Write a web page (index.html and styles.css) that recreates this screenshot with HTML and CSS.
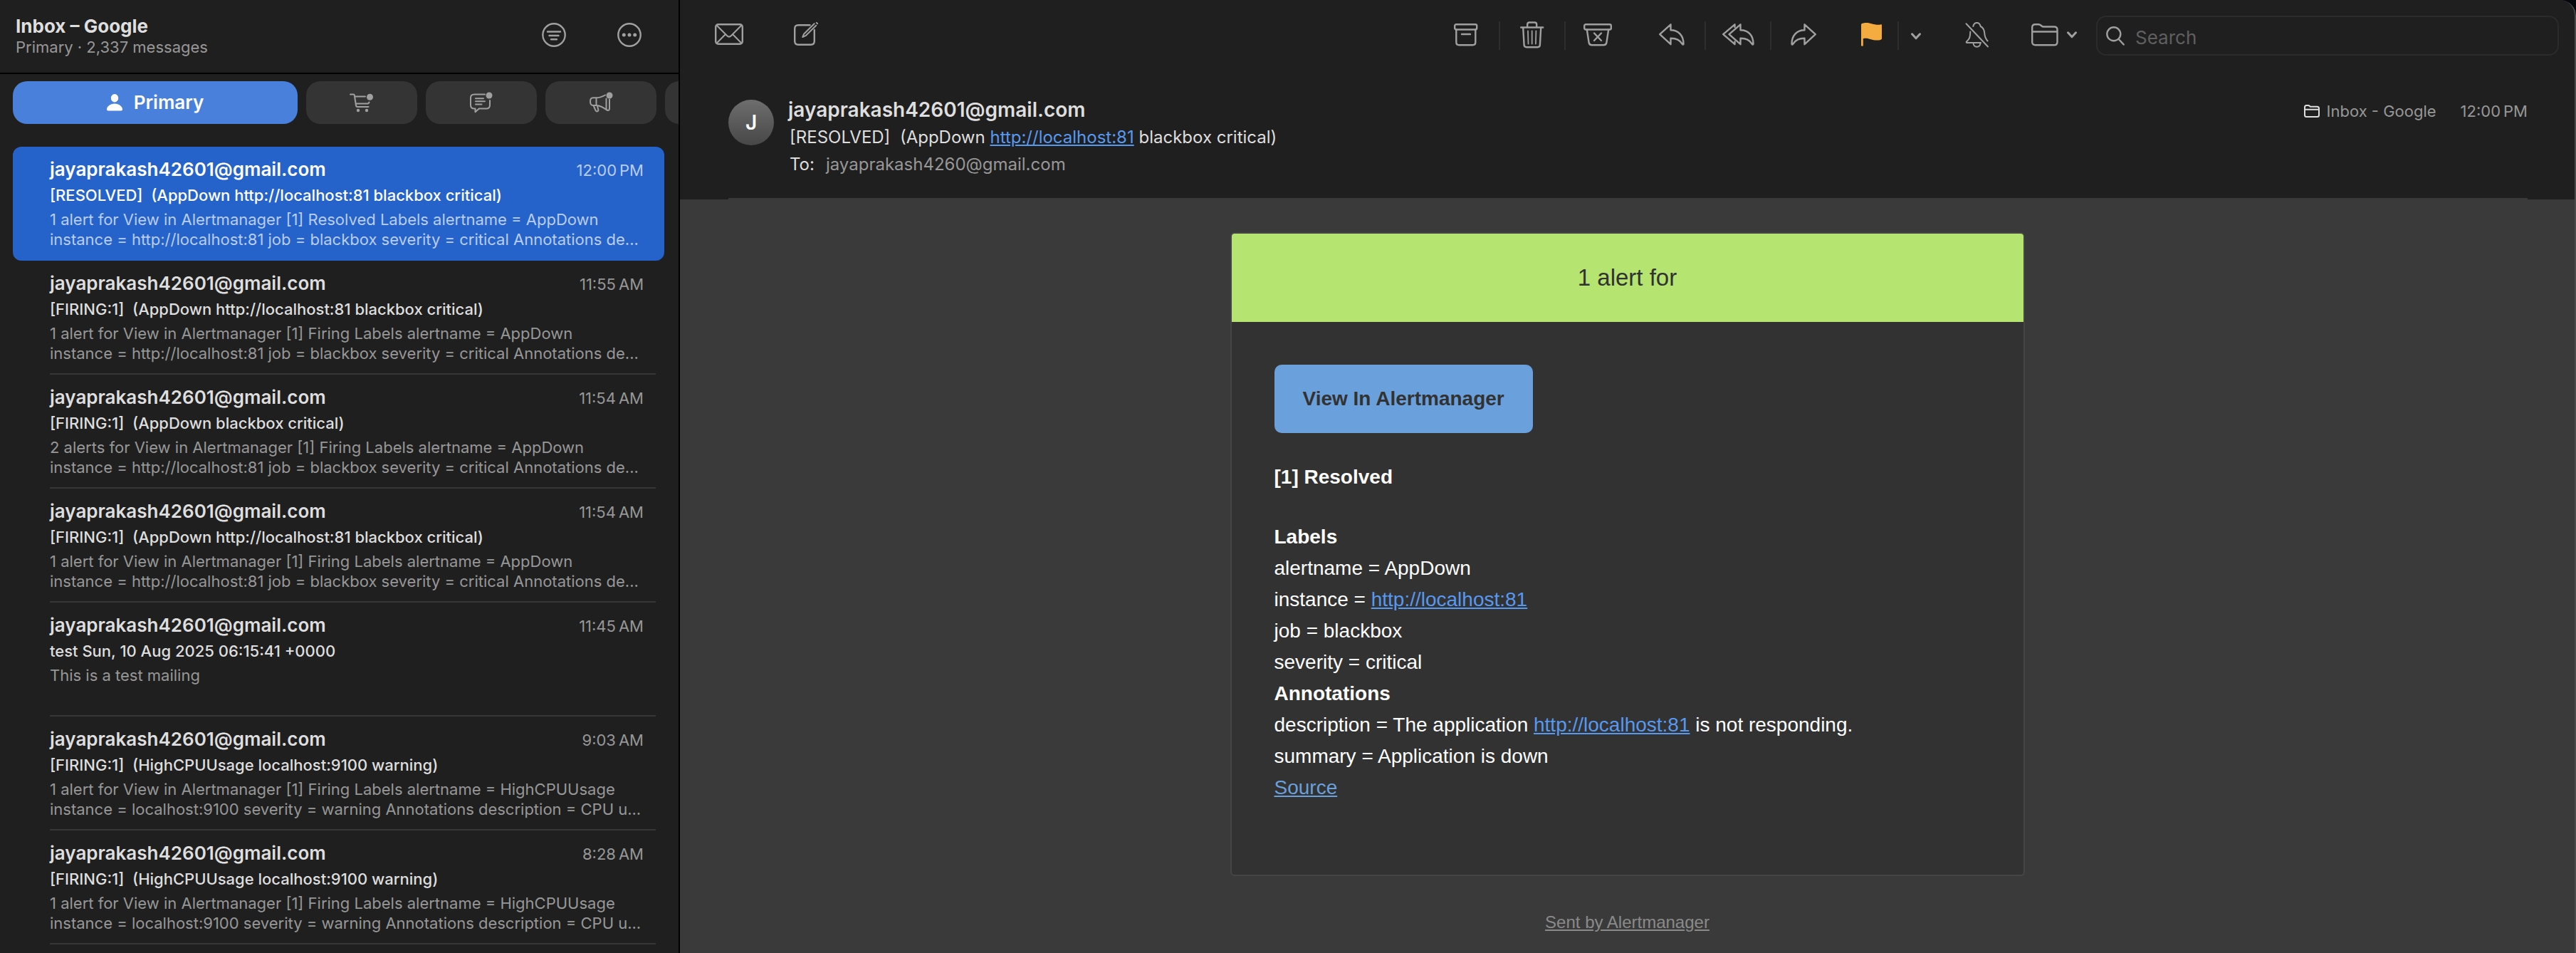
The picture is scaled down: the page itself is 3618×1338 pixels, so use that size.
FILE: index.html
```html
<!DOCTYPE html>
<html lang="en">
<head>
<meta charset="utf-8">
<title>Inbox – Google</title>
<meta name="viewport" content="width=device-width, initial-scale=1">
<link rel="stylesheet" href="styles.css">
</head>
<body>
<div class="window">
  <aside class="sidebar">
    <header class="sidebar-header">
      <div class="mailbox">
        <h1 class="mailbox-name">Inbox – Google</h1>
        <p class="mailbox-meta">Primary · 2,337 messages</p>
      </div>
      <div class="sidebar-actions">
        <button class="icon-button" type="button" aria-label="Filter">
          <svg class="icon" width="34" height="34" viewBox="0 0 34 34"><circle cx="17" cy="17" r="15.7"/><path d="M8 12.5h18M10.5 18h13M13 23.3h8"/></svg>
        </button>
        <button class="icon-button" type="button" aria-label="More">
          <svg class="icon" width="34" height="34" viewBox="0 0 34 34"><circle cx="17" cy="17" r="15.7"/><g class="solid"><circle cx="9.3" cy="17" r="2.5"/><circle cx="17" cy="17" r="2.5"/><circle cx="24.7" cy="17" r="2.5"/></g></svg>
        </button>
      </div>
    </header>

    <nav class="tabs" aria-label="Categories">
      <button class="tab tab-active" type="button">
        <svg width="22" height="24" viewBox="0 0 22 24"><path fill="currentColor" d="M11 0a5.2 5.7 0 0 1 0 11.4A5.2 5.7 0 0 1 11 0zM2 23.5c-1.300 0-2-.7-2-1.900C0 17.500 5 13.500 11 13.500s11 4 11 8.100c0 1.200-.7 1.900-2 1.900z"/></svg>
        <span>Primary</span>
      </button>
      <button class="tab" type="button" aria-label="Transactions">
        <svg class="icon thin" width="34" height="28" viewBox="0 0 34 28"><path d="M1 2.500h4.500c.7 0 1.200.4 1.300 1.100L9 18c.2 1.300.8 1.900 2 1.900h15.500M7.500 5.500H22M8.700 15.500h16.500c1.300 0 1.900-.6 2.200-2"/><g class="solid"><circle cx="12" cy="25" r="2.200"/><circle cx="24" cy="25" r="2.200"/><circle cx="28.500" cy="6.300" r="4.500"/></g></svg>
      </button>
      <button class="tab" type="button" aria-label="Updates">
        <svg class="icon thin" width="32" height="30" viewBox="0 0 32 30"><path d="M21 3.500H6C3 3.500 1 5.500 1 8.500v10c0 3 2 5 5 5h1.500v4.700l5.300-4.700H23c3 0 5-2 5-5V12M8 9.200h11M8 13.300h13M8 17.500h8.500"/><g class="solid"><circle cx="27" cy="5" r="4.500"/></g></svg>
      </button>
      <button class="tab" type="button" aria-label="Promotions">
        <svg class="icon thin" width="33" height="30" viewBox="0 0 33 30"><path d="M22 4.500C17 7.300 13.500 8.300 9.500 8.300H5C2.500 8.300 1 10 1 13.500s1.500 5.500 4 5.500h4.500c5 .3 9 2 14 6M9.500 8.500v10.300M23.500 9.500V23c0 4 4.500 4 4.500 0V10.500M5.500 19.200l3 6.800c1 2.500 4.300 1.500 3.800-1l-1.500-5.700"/><g class="solid"><circle cx="28" cy="5" r="4.500"/></g></svg>
      </button>
      <button class="tab" type="button" aria-label="All Mail"></button>
    </nav>

    <ul class="messages">
      <li class="message selected">
        <a class="message-link" href="#m1">
          <span class="line"><strong class="sender">jayaprakash42601@gmail.com</strong><time class="time">12:00&#8239;PM</time></span>
          <span class="subject">[RESOLVED]&nbsp; (AppDown http://localhost:81 blackbox critical)</span>
          <span class="preview">1 alert for View in Alertmanager [1] Resolved Labels alertname = AppDown<br>instance = http://localhost:81 job = blackbox severity = critical Annotations de...</span>
        </a>
      </li>
      <li class="message">
        <a class="message-link" href="#m2">
          <span class="line"><strong class="sender">jayaprakash42601@gmail.com</strong><time class="time">11:55&#8239;AM</time></span>
          <span class="subject">[FIRING:1]&nbsp; (AppDown http://localhost:81 blackbox critical)</span>
          <span class="preview">1 alert for View in Alertmanager [1] Firing Labels alertname = AppDown<br>instance = http://localhost:81 job = blackbox severity = critical Annotations de...</span>
        </a>
      </li>
      <li class="message">
        <a class="message-link" href="#m3">
          <span class="line"><strong class="sender">jayaprakash42601@gmail.com</strong><time class="time">11:54&#8239;AM</time></span>
          <span class="subject">[FIRING:1]&nbsp; (AppDown blackbox critical)</span>
          <span class="preview">2 alerts for View in Alertmanager [1] Firing Labels alertname = AppDown<br>instance = http://localhost:81 job = blackbox severity = critical Annotations de...</span>
        </a>
      </li>
      <li class="message">
        <a class="message-link" href="#m4">
          <span class="line"><strong class="sender">jayaprakash42601@gmail.com</strong><time class="time">11:54&#8239;AM</time></span>
          <span class="subject">[FIRING:1]&nbsp; (AppDown http://localhost:81 blackbox critical)</span>
          <span class="preview">1 alert for View in Alertmanager [1] Firing Labels alertname = AppDown<br>instance = http://localhost:81 job = blackbox severity = critical Annotations de...</span>
        </a>
      </li>
      <li class="message">
        <a class="message-link" href="#m5">
          <span class="line"><strong class="sender">jayaprakash42601@gmail.com</strong><time class="time">11:45&#8239;AM</time></span>
          <span class="subject">test Sun, 10 Aug 2025 06:15:41 +0000</span>
          <span class="preview">This is a test mailing</span>
        </a>
      </li>
      <li class="message">
        <a class="message-link" href="#m6">
          <span class="line"><strong class="sender">jayaprakash42601@gmail.com</strong><time class="time">9:03&#8239;AM</time></span>
          <span class="subject">[FIRING:1]&nbsp; (HighCPUUsage localhost:9100 warning)</span>
          <span class="preview">1 alert for View in Alertmanager [1] Firing Labels alertname = HighCPUUsage<br>instance = localhost:9100 severity = warning Annotations description = CPU u...</span>
        </a>
      </li>
      <li class="message">
        <a class="message-link" href="#m7">
          <span class="line"><strong class="sender">jayaprakash42601@gmail.com</strong><time class="time">8:28&#8239;AM</time></span>
          <span class="subject">[FIRING:1]&nbsp; (HighCPUUsage localhost:9100 warning)</span>
          <span class="preview">1 alert for View in Alertmanager [1] Firing Labels alertname = HighCPUUsage<br>instance = localhost:9100 severity = warning Annotations description = CPU u...</span>
        </a>
      </li>
    </ul>
  </aside>

  <main class="viewer">
    <div class="toolbar">
      <div class="compose-actions">
        <button class="icon-button" type="button" aria-label="Get mail">
          <svg class="icon" width="40" height="32" viewBox="0 0 40 32"><rect x="1.200" y="2.200" width="37.600" height="27.600" rx="3.500"/><path d="M2.500 3.500l14.700 14.700c1.800 1.800 3.800 1.800 5.600 0L37.500 3.500M2.500 28.700l12.300-12.500M37.500 28.700L25.200 16.200" stroke-width="2"/></svg>
        </button>
        <button class="icon-button" type="button" aria-label="New message">
          <svg class="icon" width="34" height="34" viewBox="0 0 34 34"><path d="M22.500 4.200H6.200c-3.300 0-5 1.700-5 5v17.600c0 3.300 1.700 5 5 5h17.600c3.300 0 5-1.700 5-5V11"/><path d="M12.300 21l1.700-4.200L28.700 2.200M12.300 21l4.200-1.800L31.200 4.800M31.800.9l1.300 1.300" stroke-width="2"/></svg>
        </button>
      </div>

      <div class="group">
        <button class="cell" type="button" aria-label="Archive">
          <svg class="icon" width="34" height="32" viewBox="0 0 34 32"><rect x="1.200" y="1.200" width="31" height="7.300" rx="2"/><path d="M3.300 8.500v17.700c0 2.800 1.300 4 4 4h19c2.700 0 4-1.200 4-4V8.500M11 15h12"/></svg>
        </button>
        <button class="cell" type="button" aria-label="Delete">
          <svg class="icon" width="34" height="38" viewBox="0 0 34 38"><path d="M1.200 8.500h31M10.200 8V4.300c0-1.800 1-2.800 2.800-2.800h7.400c1.800 0 2.800 1 2.800 2.800V8M4.200 9l1.400 24c.1 2.200 1.200 3.200 3.300 3.200h15.700c2.100 0 3.200-1 3.300-3.200L29.200 9"/><path d="M11 13.500l.5 18M16.700 13.500v18M22.400 13.500l-.5 18" stroke-width="1.800"/></svg>
        </button>
        <button class="cell" type="button" aria-label="Junk">
          <svg class="icon" width="40" height="32" viewBox="0 0 40 32"><rect x="1.200" y="1.200" width="37.600" height="7.300" rx="2"/><path d="M4.800 8.500l2.800 18.200c.4 2.500 1.700 3.500 4.200 3.500h16.400c2.500 0 3.800-1 4.200-3.500l2.800-18.200M15 13.500l10 10.500M25 13.500L15 24"/></svg>
        </button>
      </div>

      <div class="group">
        <button class="cell" type="button" aria-label="Reply">
          <svg class="icon" width="36" height="31" viewBox="0 0 36 31"><path d="M1.200 15.200L16.500 1.300V9.300C27.500 9.300 34.500 17 34.500 28.500C34.500 29.700 33.500 29.900 33 29C29 22.800 24.500 20.800 16.500 20.800V29.200Z"/></svg>
        </button>
        <button class="cell" type="button" aria-label="Reply all">
          <svg class="icon" width="45" height="31" viewBox="0 0 45 31"><path d="M17.500 5V1.300L1.200 15.200L17.500 29.200V25.500"/><path d="M9.500 15.200L25.500 1.300V9.300C37 9.300 43.500 17 43.500 28.500C43.500 29.700 42.500 29.900 42 29C38 22.800 33.500 20.800 25.500 20.800V29.200Z"/></svg>
        </button>
        <button class="cell" type="button" aria-label="Forward">
          <svg class="icon" width="36" height="31" viewBox="0 0 36 31"><path d="M34.800 15.200L19.500 1.300V9.300C8.500 9.300 1.500 17 1.500 28.500C1.500 29.700 2.500 29.900 3 29C7 22.800 11.500 20.800 19.500 20.800V29.200Z"/></svg>
        </button>
      </div>

      <div class="group">
        <button class="cell cell-flag" type="button" aria-label="Flag">
          <svg width="29" height="33" viewBox="0 0 29 33"><path fill="#f4ab40" d="M0 2.800C0 1 3 0 7 0c7 0 10 2.800 17 2.800 1.600 0 2.700-.3 3.700-.6.800-.2 1.300.1 1.300.8v19c0 1.800-3 2.600-6.500 2.600C15 24.600 12 21.700 6 21.700c-1.500 0-2.500.2-3.200.5v9.300c0 1.800-2.800 1.800-2.800 0z"/></svg>
        </button>
        <button class="cell cell-menu" type="button" aria-label="Flag colours">
          <svg class="icon chevron" width="14" height="10" viewBox="0 0 14 10"><path d="M1.500 1.800L7 7.800l5.500-6"/></svg>
        </button>
      </div>

      <button class="cell cell-mute" type="button" aria-label="Mute">
        <svg class="icon thin" width="34" height="36" viewBox="0 0 34 36"><path d="M1.500 2.200L32 34.500M11.300 6c.7-3 2.500-5 5.200-5s4.500 2 5.200 5c4 2 5.500 5.500 5.700 10.500.2 5 1.600 7 4.200 10M7.300 13.500c-.3 9-1.400 10-5.300 14-.6.700-.3 1.500.6 1.500h19.500M11.500 29.500c.3 3.400 2.200 5.200 5 5.200s4.700-1.800 5-5.200"/></svg>
      </button>

      <button class="move" type="button" aria-label="Move to">
        <svg class="icon" width="38" height="32" viewBox="0 0 38 32"><path d="M1.200 26V5.500C1.200 2.700 2.600 1.200 5.500 1.200H10c1.500 0 2.300.4 3.300 1.300l1.200 1c.9.800 1.600 1 2.900 1h14.700c2.900 0 4.400 1.500 4.400 4.300V26c0 2.900-1.500 4.300-4.400 4.300H5.600C2.700 30.300 1.200 28.900 1.200 26zM1.200 11.500h35.300"/></svg>
        <svg class="icon chevron" width="14" height="10" viewBox="0 0 14 10"><path d="M1.500 1.800L7 7.800l5.500-6"/></svg>
      </button>

      <label class="search">
        <svg class="icon" width="26" height="27" viewBox="0 0 26 27"><circle cx="10.800" cy="10.800" r="9.500"/><path d="M17.700 18l7 7.500"/></svg>
        <input class="search-input" type="search" placeholder="Search" aria-label="Search">
      </label>
    </div>

    <header class="message-header">
      <span class="avatar" aria-hidden="true">J</span>
      <div class="envelope">
        <h2 class="from">jayaprakash42601@gmail.com</h2>
        <p class="header-line">[RESOLVED]&nbsp; (AppDown <a class="link" href="http://localhost:81">http://localhost:81</a> blackbox critical)</p>
        <p class="header-line recipients"><span>To:</span><span class="recipient">jayaprakash4260@gmail.com</span></p>
      </div>
      <div class="origin">
        <svg class="origin-icon" width="22" height="18" viewBox="0 0 22 18"><path d="M1 14V3.500C1 1.800 1.800 1 3.500 1h2.300c.9 0 1.400.2 2 .8l.4.4c.5.500.9.600 1.700.600h8.600c1.700 0 2.500.8 2.500 2.500V14.500c0 1.700-.8 2.500-2.500 2.500h-15C1.800 17 1 16.200 1 14.500zM1 6.800h20"/></svg>
        <span>Inbox - Google</span>
        <time class="origin-time">12:00&#8239;PM</time>
      </div>
    </header>

    <article class="mail-body">
      <section class="alert-card">
        <h3 class="alert-title">1 alert for</h3>
        <div class="alert-content">
          <a class="alert-button" href="#alertmanager">View In Alertmanager</a>
          <p><strong>[1] Resolved</strong></p>
          <p>
            <strong>Labels</strong><br>
            alertname = AppDown<br>
            instance = <a class="link" href="http://localhost:81">http://localhost:81</a><br>
            job = blackbox<br>
            severity = critical<br>
            <strong>Annotations</strong><br>
            description = The application <a class="link" href="http://localhost:81">http://localhost:81</a> is not responding.<br>
            summary = Application is down<br>
            <a class="source-link" href="#source">Source</a>
          </p>
        </div>
      </section>
      <footer class="mail-footer"><a class="footer-link" href="#alertmanager">Sent by Alertmanager</a></footer>
    </article>
  </main>
</div>
</body>
</html>
```
FILE: styles.css
```css
* {
  box-sizing: border-box;
}

body {
  margin: 0;
  background: #06070d;
  color: #dedede;
  font-family: Inter, "Liberation Sans", sans-serif;
  font-size: 22px;
  line-height: 28px;
}

h1, h2, h3, p, ul {
  margin: 0;
  padding: 0;
}

button {
  margin: 0;
  padding: 0;
  border: 0;
  background: none;
  color: inherit;
  font: inherit;
}

.window {
  position: relative;
  display: flex;
  min-height: 100vh;
  overflow: hidden;
  background: #1f1f1f;
  border-top-right-radius: 22px;
}

/* light rim along the right edge of the window */
.window::after {
  content: "";
  position: absolute;
  inset: 0;
  border-right: 2px solid #4a4a4a;
  border-top-right-radius: 22px;
  pointer-events: none;
}

.icon {
  display: block;
  flex: none;
  fill: none;
  stroke: #a0a0a0;
  stroke-width: 2.4;
  stroke-linecap: round;
  stroke-linejoin: round;
}

.thin {
  stroke-width: 2;
}

.chevron {
  stroke-width: 3;
}

.solid {
  fill: #a0a0a0;
  stroke: none;
}

/* Sidebar */

.sidebar {
  flex: none;
  width: 955px;
  border-right: 2px solid #000;
  overflow: hidden;
}

.sidebar-header {
  display: flex;
  justify-content: space-between;
  align-items: center;
  height: 104px;
  padding: 0 52px 2px 22px;
  border-bottom: 2px solid #000;
}

.mailbox-name {
  font-size: 26px;
  line-height: 32px;
  font-weight: 700;
}

.mailbox-meta {
  line-height: 26px;
  color: #979797;
}

.sidebar-actions {
  display: flex;
  gap: 72px;
  padding-bottom: 2px;
}

.tabs {
  display: flex;
  gap: 12px;
  padding: 10px 0 32px 18px;
}

.tab {
  display: flex;
  flex: none;
  align-items: center;
  justify-content: center;
  width: 156px;
  height: 60px;
  border-radius: 20px;
  background: #343434;
}

.tab-active {
  gap: 16px;
  width: 400px;
  background: #4880db;
  color: #fff;
  font-size: 26px;
  font-weight: 600;
}

.messages {
  list-style: none;
  padding: 0 20px 0 18px;
}

.message {
  height: 160px;
  padding: 16px 12px 0 52px;
  border-radius: 12px;
}

.message-link {
  display: flex;
  flex-direction: column;
  gap: 6px;
  height: 144px;
  padding-right: 17px;
  border-bottom: 2px solid #363636;
  color: inherit;
  text-decoration: none;
  white-space: nowrap;
}

.line {
  display: flex;
  align-items: baseline;
  justify-content: space-between;
}

.sender {
  font-size: 26px;
  line-height: 32px;
  font-weight: 600;
}

.subject {
  font-weight: 500;
}

.time,
.preview {
  color: #979797;
}

.selected {
  background: #2563cb;
  color: #fff;
}

.selected .message-link {
  border-color: transparent;
}

.selected .time,
.selected .preview {
  color: #b9cdee;
}

/* Viewer */

.viewer {
  display: flex;
  flex: 1;
  flex-direction: column;
  min-width: 0;
}

.toolbar {
  display: flex;
  align-items: center;
  gap: 13px;
  height: 100px;
  padding: 0 24px 0 49px;
}

.compose-actions {
  display: flex;
  align-items: center;
  gap: 71px;
  margin-right: auto;
  padding-bottom: 4px;
}

.group {
  display: flex;
}

.cell {
  display: flex;
  align-items: center;
  justify-content: center;
  width: 92px;
  height: 40px;
  padding-bottom: 3px;
}

.group .cell + .cell {
  border-left: 2px solid #2e2e2e;
}

.cell-flag {
  width: 74px;
}

.group .cell-menu {
  width: 50px;
  padding: 2px 0 0;
}

.cell-mute {
  width: 98px;
}

.move {
  display: flex;
  align-items: center;
  gap: 12px;
  padding: 0 14px 3px;
}

.search {
  display: flex;
  align-items: center;
  gap: 15px;
  flex: 0 1 650px;
  height: 56px;
  padding: 0 12px;
  border: 2px solid #2b2b2b;
  border-radius: 14px;
}

.search-input {
  flex: 1;
  min-width: 0;
  padding: 6px 0 0;
  border: 0;
  outline: 0;
  background: none;
  color: #dedede;
  font: inherit;
  font-size: 26px;
}

.search-input::placeholder {
  color: #5f5f5f;
}

.message-header {
  display: flex;
  align-items: flex-start;
  height: 180px;
  margin: 0 68px;
  padding-top: 38px;
  border-bottom: 2px solid #3a3a3a;
}

.avatar {
  flex: none;
  width: 64px;
  height: 64px;
  margin-top: 2px;
  border-radius: 50%;
  background: linear-gradient(#6e6e6e, #474747);
  color: #fff;
  font-size: 28px;
  line-height: 64px;
  font-weight: 600;
  text-align: center;
}

.envelope {
  margin-left: 20px;
}

.from {
  font-size: 28px;
  line-height: 32px;
  font-weight: 600;
}

.header-line {
  font-size: 24px;
  line-height: 30px;
  margin-top: 8px;
  padding-left: 2px;
}

.recipients {
  display: flex;
  gap: 16px;
}

.recipient {
  color: #979797;
}

.link {
  color: #5899f0;
}

.origin {
  display: flex;
  align-items: center;
  gap: 10px;
  margin-left: auto;
  padding-top: 4px;
  color: #979797;
}

.origin-icon {
  fill: none;
  stroke: #dedede;
  stroke-width: 2;
}

.origin-time {
  margin-left: 24px;
}

/* Mail body */

.mail-body {
  flex: 1;
  padding: 46px 42px 20px 40px;
  background: #3a3a3a;
  font-family: "Liberation Sans", Arial, sans-serif;
}

.alert-card {
  max-width: 1116px;
  margin: 0 auto;
  border: 2px solid #454545;
  border-radius: 6px;
  background: #323232;
  color: #fff;
  overflow: hidden;
}

.alert-title {
  padding: 40px;
  background: #b5e471;
  color: #323232;
  font-size: 33px;
  line-height: 44px;
  font-weight: 500;
  text-align: center;
}

.alert-content {
  display: flex;
  flex-direction: column;
  align-items: flex-start;
  gap: 40px;
  padding: 60px 60px 100px;
  font-size: 28px;
  line-height: 44px;
}

.alert-button {
  padding: 26px 40px;
  border-radius: 10px;
  background: #6aa0db;
  color: #323232;
  font-weight: 700;
  text-decoration: none;
}

.source-link {
  color: #6aa0db;
}

.mail-footer {
  margin-top: 45px;
  font-size: 24px;
  line-height: 40px;
  text-align: center;
}

.footer-link {
  color: #8a8a8a;
}
```
